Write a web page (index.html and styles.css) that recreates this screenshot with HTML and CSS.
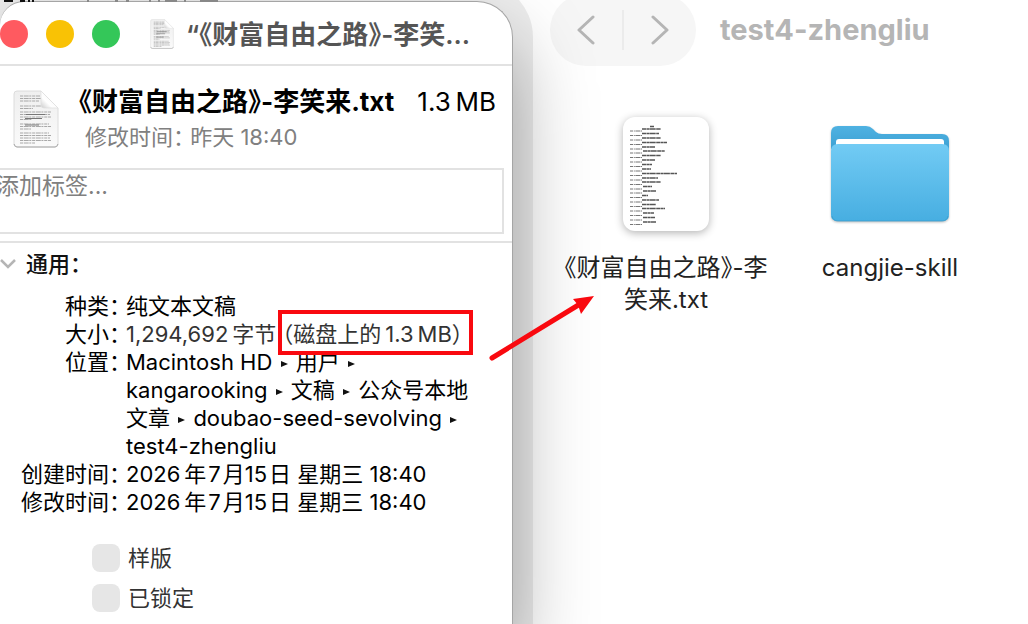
FILE: index.html
```
<!DOCTYPE html>
<html lang="zh-CN">
<head>
  <meta charset="UTF-8">
  <title>test4-zhengliu</title>
  <link rel="stylesheet" href="styles.css">
</head>
<body>

  <svg class="defs" aria-hidden="true">
    <defs>
      <linearGradient id="paper" x1="0" y1="0" x2="0" y2="1">
        <stop offset="0" stop-color="#efefef"/>
        <stop offset="1" stop-color="#fafafa"/>
      </linearGradient>
      <linearGradient id="fold" x1="0" y1="1" x2="1" y2="0">
        <stop offset="0" stop-color="#cccccc"/>
        <stop offset="0.35" stop-color="#ffffff"/>
        <stop offset="1" stop-color="#f4f4f4"/>
      </linearGradient>
      <linearGradient id="folderBack" x1="0" y1="0" x2="0" y2="1">
        <stop offset="0" stop-color="#4fb2e2"/>
        <stop offset="1" stop-color="#3b9fd2"/>
      </linearGradient>
      <linearGradient id="folderFront" x1="0" y1="0" x2="0" y2="1">
        <stop offset="0" stop-color="#72cbf4"/>
        <stop offset="1" stop-color="#47aee1"/>
      </linearGradient>
    </defs>
    <symbol id="doc" viewBox="0 0 46 58">
      <path d="M4 1H28L45 18V54Q45 57 42 57H4Q1 57 1 54V4Q1 1 4 1Z" fill="url(#paper)" stroke="#dcdcdc"/>
      <path d="M1 54Q2 57 4 57H42Q44 57 45 54" fill="none" stroke="#a9a9a9"/>
      <g fill="none" stroke="#a8a8a8" stroke-width="1.2">
        <path d="M7 6H27M7 8.500H28M7 11H26M7 16H28M7 18.500H20M7 22H38M7 24.500H37M7 27H38M7 29.500H19M7 34H36M7 36.500H38M7 39H18M7 43H36M7 45.500H38M7 48H37M7 50.500H38M7 53H22" stroke-dasharray="3 .7 5 .6 2 .8"/>
        <path d="M13 24.500H32M12 28.500H29M12 35H26" stroke="#777"/>
      </g>
      <path d="M28 1V15Q28 18 31 18H45Z" fill="url(#fold)" stroke="#dedede" stroke-width=".7"/>
    </symbol>
  </svg>

  <div class="desktop">

    <!-- edge of the window underneath -->
    <svg class="behind" viewBox="0 0 240 2" aria-hidden="true">
      <path d="M4 1H13M20 1H25M28 1H30M32 1H34" stroke="#111" stroke-width="2"/>
      <path d="M87 1H89M115 1H118M126 1H129M149 1H151M158 1H160M165 1H177M184 1H186M200 1H218" stroke="#888" stroke-width="2"/>
    </svg>

    <section class="info">
      <header class="titlebar">
        <button class="light red" aria-label="关闭"></button>
        <button class="light yellow" aria-label="最小化"></button>
        <button class="light green" aria-label="缩放"></button>
        <svg class="title-icon"><use href="#doc"/></svg>
        <h1>“《财富自由之路》-李笑...</h1>
      </header>

      <div class="summary">
        <svg class="summary-icon"><use href="#doc"/></svg>
        <div class="summary-text">
          <div class="summary-name"><strong>《财富自由之路》-李笑来.txt</strong><span>1.3&thinsp;MB</span></div>
          <div class="summary-date">修改时间： 昨天 18:40</div>
        </div>
      </div>

      <textarea class="tags" placeholder="添加标签..." aria-label="标签"></textarea>

      <div class="general">
        <h2>
          <svg class="disclosure" viewBox="0 0 16 10"><path d="M1 1L8 8L15 1"/></svg>
          通用：
        </h2>
        <dl>
          <dt>种类：</dt>
          <dd>纯文本文稿</dd>
          <dt>大小：</dt>
          <dd class="size">1,294,692&thinsp;字节<span class="mark">（磁盘上的&thinsp;1.3&thinsp;MB）</span></dd>
          <dt>位置：</dt>
          <dd>Macintosh HD <i></i> 用户 <i></i><br>kangarooking <i></i> 文稿 <i></i> 公众号本地<br>文章 <i></i> doubao-seed-sevolving <i></i><br>test4-zhengliu</dd>
          <dt>创建时间：</dt>
          <dd>2026&thinsp;年&hairsp;7&hairsp;月15&hairsp;日 星期三 18:40</dd>
          <dt>修改时间：</dt>
          <dd>2026&thinsp;年&hairsp;7&hairsp;月15&hairsp;日 星期三 18:40</dd>
        </dl>
        <label class="check"><input type="checkbox">样版</label>
        <label class="check"><input type="checkbox">已锁定</label>
      </div>
    </section>

    <main class="finder">
      <header class="toolbar">
        <div class="nav">
          <button aria-label="后退"><svg viewBox="0 0 18 30"><path d="M16 2L2 15L16 28"/></svg></button>
          <button aria-label="前进"><svg viewBox="0 0 18 30"><path d="M2 2L16 15L2 28"/></svg></button>
        </div>
        <h2>test4-zhengliu</h2>
      </header>

      <div class="files">
        <figure>
          <div class="thumb">
            <svg class="page" viewBox="0 0 86 114">
              <g fill="none" stroke="#555" stroke-width="1.500" stroke-dasharray="4 .4 3 .3 6 .5">
                <path d="M27 9.500H31M19 12H38M19 16.500H36M19 21H38M19 25.500H44M19 30H32M20 34H42M19 38.500H38M19 43H32M19 47.500H29M19 52H28M19 56.500H54M19 61H35M19 65H38M20 69.500H29M20 74H33M19 78.500H25M19 83H36M19 87.500H33M19 91.500H42M20 96H31M20 100.500H32M20 105H33"/>
              </g>
              <g fill="none" stroke="#777" stroke-dasharray="3 .8 1 .6 5 .5">
                <path d="M7 14H19M7 18.500H19M7 23H19M7 27.500H19M7 32H19M7 36H19M7 40.500H19M7 45H19M7 49.500H19M7 54H19M7 58.500H19M7 63H19M7 67.500H19M7 72H19M7 76H19M7 80.500H19M7 85H19M7 89.500H19M7 94H19M7 98.500H19M7 103H19M7 107.500H19"/>
              </g>
            </svg>
          </div>
          <figcaption>《财富自由之路》-李<br>笑来.txt</figcaption>
        </figure>
        <figure>
          <div class="thumb">
            <svg class="folder" viewBox="0 0 120 98">
              <path d="M1 24V8Q1 1 8 1H36Q40 1 43 4L46 7Q48 9 52 9H112Q119 9 119 16V26Z" fill="url(#folderBack)"/>
              <path d="M6 22V17Q6 14 9 14H111Q114 14 114 17V22Z" fill="#fff"/>
              <path d="M1 26Q1 19 8 19H112Q119 19 119 26V90Q119 96 112 96H8Q1 96 1 90Z" fill="url(#folderFront)"/>
              <path d="M2 91Q3 96 8 96H112Q117 96 118 91" fill="none" stroke="#3a9ccc" stroke-width=".8"/>
            </svg>
          </div>
          <figcaption>cangjie-skill</figcaption>
        </figure>
      </div>
    </main>

    <svg class="arrow" viewBox="0 0 110 70">
      <path d="M4 63L92 9" stroke="#f9090f" stroke-width="5" stroke-linecap="round"/>
      <path d="M106 1L85 4L90 10L93 19Z" fill="#f9090f"/>
    </svg>
  </div>

</body>
</html>
```
FILE: styles.css
```
* {
  box-sizing: border-box;
}

body {
  margin: 0;
  background: #fff;
  color: #111;
  font-family: Inter, "Noto Sans CJK SC", sans-serif;
  font-size: 22px;
  line-height: 28px;
  font-feature-settings: "halt";
}

h1, h2, dl, dd, figure {
  margin: 0;
}

button {
  border: 0;
  padding: 0;
  background: none;
}

.defs {
  display: block;
  width: 0;
  height: 0;
}

.desktop {
  position: relative;
  display: grid;
  grid-template-columns: 1fr 1fr;
  min-height: 100vh;
  overflow: hidden;
}

.behind {
  position: absolute;
  z-index: 2;
  left: 0;
  top: 0;
  width: 240px;
  height: 2px;
}

/* info window */
.info {
  z-index: 1;
  margin: 1px 1px 0 0;
  background: #fff;
  border: 1px solid #a5a5a5;
  border-width: 1px 1px 0 0;
  border-radius: 24px 36px 0 0;
  box-shadow: 0 0 0 20px rgba(0, 0, 0, 0.07), 0 40px 80px rgba(0, 0, 0, 0.36);
}

.titlebar {
  display: flex;
  align-items: center;
  height: 64px;
  padding-top: 2px;
  border-bottom: 2px solid #e2e2e2;
}

.light {
  width: 28px;
  height: 28px;
  margin-right: 18px;
  border-radius: 50%;
}

.red {
  background: #ff5a60;
}

.yellow {
  background: #f9c205;
}

.green {
  background: #34c759;
}

.title-icon {
  width: 24px;
  height: 30px;
  margin: 0 12px;
}

.titlebar h1 {
  padding-top: 2px;
  color: #555;
  font-size: 26px;
  font-weight: 600;
  white-space: nowrap;
}

.summary {
  display: flex;
  align-items: center;
  gap: 20px;
  height: 102px;
  padding: 4px 16px 0 13px;
}

.summary-icon {
  width: 46px;
  height: 58px;
}

.summary-text {
  flex: 1;
}

.summary-name {
  display: flex;
  justify-content: space-between;
  color: #000;
  font-size: 26px;
  line-height: 36px;
  white-space: nowrap;
}

.summary-date {
  padding-left: 6px;
  color: #808080;
  line-height: 34px;
}

.tags {
  display: block;
  width: calc(100% - 2px);
  height: 66px;
  margin-left: -6px;
  padding: 0;
  border: 2px solid #e2e2e2;
  background: #fff;
  font: inherit;
  font-size: 23px;
  line-height: 32px;
  resize: none;
}

.tags::placeholder {
  color: #808080;
}

.general {
  margin-top: 7px;
  padding-top: 7px;
  border-top: 2px solid #e2e2e2;
}

.general h2 {
  display: flex;
  align-items: center;
  gap: 10px;
  font-size: 22px;
  font-weight: 500;
}

.disclosure {
  width: 16px;
  height: 10px;
  fill: none;
  stroke: #b5b5b5;
  stroke-width: 2.5;
}

dl {
  display: grid;
  grid-template-columns: 120px 1fr;
  column-gap: 6px;
  margin: 14px 0 28px;
  color: #000;
  white-space: nowrap;
}

dt {
  text-align: right;
}

.size {
  color: #333;
}

.mark {
  position: relative;
  margin-left: 2px;
  padding: 0 10px 0 4px;
}

.mark::after {
  content: "";
  position: absolute;
  inset: -11px 0 -8px 0;
  border: 4px solid #f9090f;
}

dd i {
  display: inline-block;
  margin: 0 2px 3px;
  border: 3px solid transparent;
  border-width: 3px 0 3px 7px;
  border-left-color: #111;
}

.check {
  display: flex;
  align-items: center;
  gap: 8px;
  margin: 0 0 12px 92px;
  color: #333;
}

.check input {
  appearance: none;
  width: 28px;
  height: 28px;
  margin: 0;
  border-radius: 8px;
  background: #e6e6e6;
}

/* finder window */
.finder {
  padding-left: 36px;
}

.toolbar {
  display: flex;
  align-items: center;
  gap: 24px;
  margin-top: -6px;
  color: #b5b5b5;
}

.nav {
  display: flex;
  height: 72px;
  width: 146px;
  padding: 16px 0;
  border-radius: 36px;
  background: #f6f6f6;
}

.nav button {
  flex: 1;
}

.nav button + button {
  border-left: 2px solid #ebebeb;
}

.nav svg {
  display: block;
  width: 18px;
  height: 30px;
  margin: auto;
  fill: none;
  stroke: #b5b5b5;
  stroke-width: 3;
  stroke-linecap: round;
  stroke-linejoin: round;
}

.toolbar h2 {
  font-size: 29px;
  font-weight: 700;
  line-height: 36px;
}

.files {
  display: grid;
  grid-template-columns: repeat(2, 224px);
  margin-top: 48px;
  padding-left: 4px;
}

figure {
  color: #222;
  font-size: 24px;
  line-height: 32px;
  text-align: center;
}

.thumb {
  display: flex;
  align-items: center;
  justify-content: center;
  height: 120px;
  margin-bottom: 18px;
}

.page {
  width: 86px;
  height: 114px;
  border-radius: 12px;
  background: #fff;
  box-shadow: 0 2px 8px rgba(0, 0, 0, 0.3);
}

.folder {
  width: 120px;
  height: 98px;
  filter: drop-shadow(0 1px 1px rgba(0, 0, 0, 0.25));
}

.arrow {
  position: absolute;
  z-index: 2;
  left: 488px;
  top: 295px;
  width: 110px;
  height: 70px;
}
```
